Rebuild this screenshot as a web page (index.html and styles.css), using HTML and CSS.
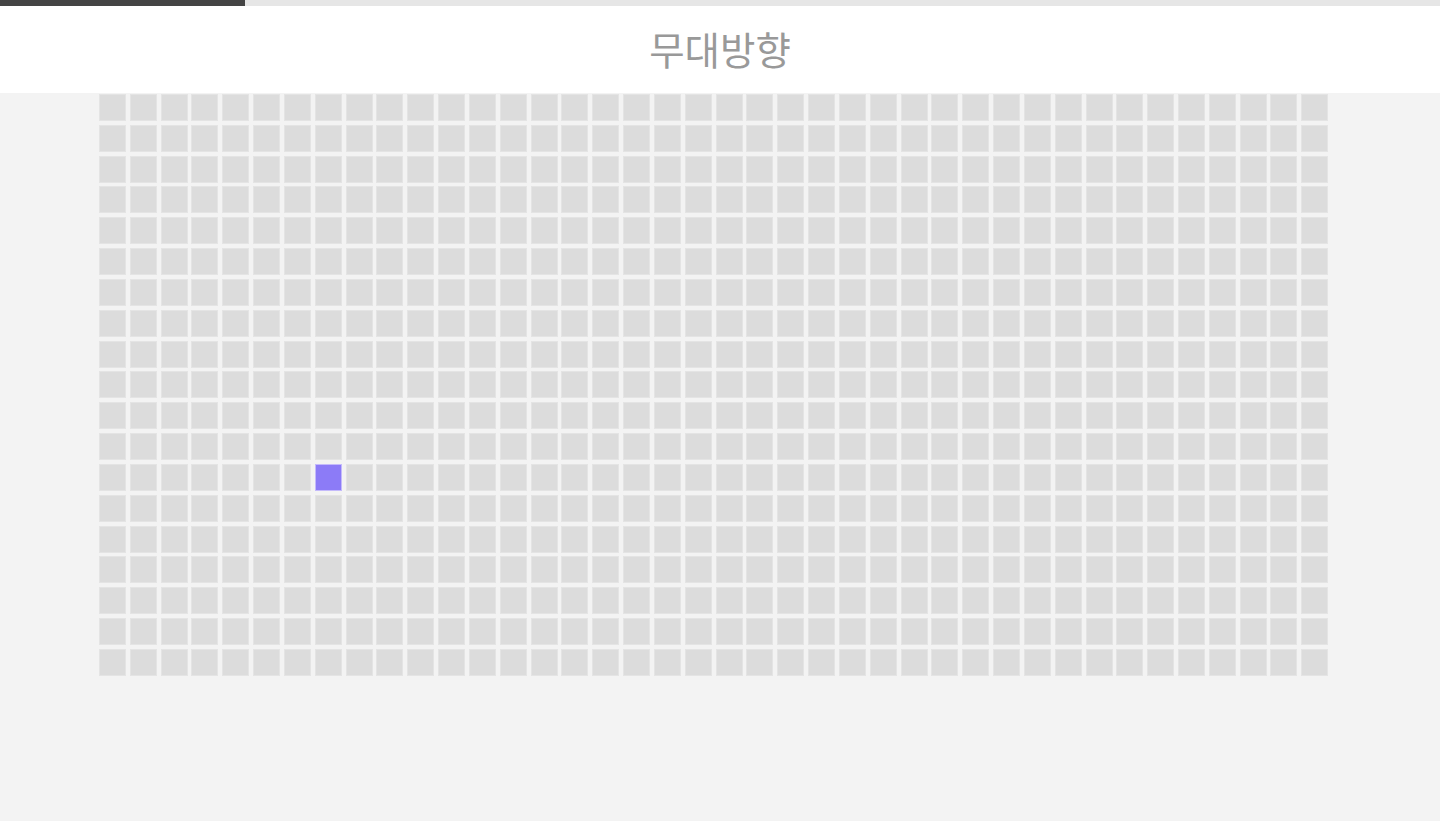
FILE: index.html
```html
<!DOCTYPE html>
<html lang="ko">
<head>
    <meta charset="UTF-8">
    <title>좌석 선택</title>
    <link rel="stylesheet" href="styles.css">
</head>
<body>
    <div class="progress">
        <div class="progress-bar"></div>
    </div>

    <div class="stage">무대방향</div>

    <div class="seat-area">
        <div class="seat-grid" id="seatGrid"></div>
    </div>

    <script>
        // 좌석 배치 (19행 x 40열)
        const ROWS = 19;
        const COLS = 40;
        const selected = ['13-8'];

        function drawSeats() {
            const grid = document.getElementById('seatGrid');
            for (let r = 1; r <= ROWS; r++) {
                for (let c = 1; c <= COLS; c++) {
                    const seat = document.createElement('div');
                    seat.className = 'seat';
                    seat.dataset.id = `${r}-${c}`;
                    if (selected.includes(seat.dataset.id)) {
                        seat.classList.add('selected');
                    }
                    grid.appendChild(seat);
                }
            }
        }

        document.addEventListener('DOMContentLoaded', drawSeats);
    </script>
</body>
</html>
```

FILE: styles.css
```css
html, body {
    margin: 0;
    height: 100%;
}
body {
    font-family: "Noto Sans CJK KR", "Noto Sans", sans-serif;
    background-color: #f3f3f3;
}
.progress {
    height: 6px;
    background: #e6e6e6;
}
.progress-bar {
    width: 245px;
    height: 100%;
    background: #444444;
}
.stage {
    height: 87px;
    padding-bottom: 4px;
    box-sizing: border-box;
    background: white;
    color: #999999;
    font-size: 38.5px;
    display: flex;
    align-items: center;
    justify-content: center;
}
.seat-area {
    padding: 1px 0 0 99px;
}
.seat-grid {
    display: grid;
    grid-template-columns: repeat(40, 27px);
    grid-auto-rows: 27px;
    gap: 3.83px;
}
.seat {
    box-sizing: border-box;
    background: #dcdcdc;
    border: 1px solid #e4e4e4;
    cursor: pointer;
}
.seat.selected {
    background: #8c7bf7;
    border-color: #c4bafb;
}
```
